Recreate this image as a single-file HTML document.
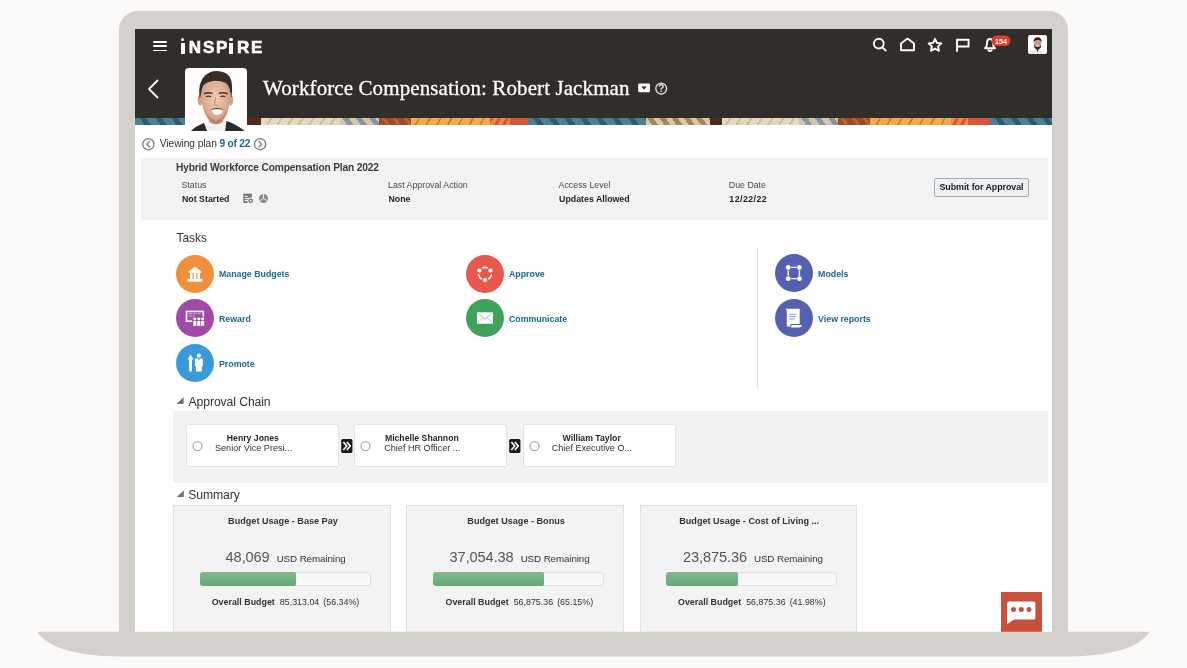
<!DOCTYPE html>
<html><head><meta charset="utf-8"><style>
html,body{margin:0;padding:0;}
body{width:1187px;height:668px;overflow:hidden;background:#fbfaf8;position:relative;font-family:'Liberation Sans', sans-serif;}
.b{position:absolute;}
.t{position:absolute;white-space:nowrap;line-height:1;font-family:'Liberation Sans', sans-serif;}
#root{position:absolute;left:0;top:0;width:1187px;height:668px;will-change:transform;}
</style></head><body><div id="root">
<div class="b" style="left:119px;top:11px;width:949px;height:629px;background:#d4d0cc;border-radius:19px 19px 0 0;"></div>
<div class="b" style="left:135px;top:29px;width:917px;height:603px;background:#fff;"></div>
<div class="b" style="left:135px;top:29px;width:917px;height:89px;background:#312d2a;"></div>
<div class="b" style="left:135px;top:118px;width:112px;height:7px;background:repeating-linear-gradient(55deg,#4a8294 0 8px,#2f5a6a 8px 13px);"></div>
<div class="b" style="left:247px;top:118px;width:14px;height:7px;background:#55291f;"></div>
<div class="b" style="left:261px;top:118px;width:79px;height:7px;background:repeating-linear-gradient(-58deg,#e4d8c0 0 7px,#cdbb9a 7px 9px);"></div>
<div class="b" style="left:340px;top:118px;width:39px;height:7px;background:repeating-linear-gradient(55deg,#d5c4a8 0 6px,#8896a4 6px 11px);"></div>
<div class="b" style="left:379px;top:118px;width:32px;height:7px;background:repeating-linear-gradient(55deg,#9c4b22 0 6px,#b8652f 6px 9px);"></div>
<div class="b" style="left:411px;top:118px;width:79px;height:7px;background:repeating-linear-gradient(-62deg,#eeab4a 0 8px,#c07a34 8px 9.5px);"></div>
<div class="b" style="left:490px;top:118px;width:20px;height:7px;background:repeating-linear-gradient(-62deg,#e98a3e 0 4px,#d6553a 4px 7px);"></div>
<div class="b" style="left:510px;top:118px;width:18px;height:7px;background:#d8553b;"></div>
<div class="b" style="left:528px;top:118px;width:118px;height:7px;background:repeating-linear-gradient(55deg,#4a8294 0 8px,#2f5a6a 8px 13px);"></div>
<div class="b" style="left:646px;top:118px;width:64px;height:7px;background:repeating-linear-gradient(55deg,#d9c7a6 0 5px,#a5845f 5px 10px);"></div>
<div class="b" style="left:710px;top:118px;width:12px;height:7px;background:#4f2a22;"></div>
<div class="b" style="left:722px;top:118px;width:77px;height:7px;background:repeating-linear-gradient(-58deg,#e4d8c0 0 7px,#cdbb9a 7px 9px);"></div>
<div class="b" style="left:799px;top:118px;width:39px;height:7px;background:repeating-linear-gradient(55deg,#d5c4a8 0 6px,#8896a4 6px 11px);"></div>
<div class="b" style="left:838px;top:118px;width:32px;height:7px;background:repeating-linear-gradient(55deg,#9c4b22 0 6px,#b8652f 6px 9px);"></div>
<div class="b" style="left:870px;top:118px;width:81px;height:7px;background:repeating-linear-gradient(-62deg,#eeab4a 0 8px,#c07a34 8px 9.5px);"></div>
<div class="b" style="left:951px;top:118px;width:17px;height:7px;background:repeating-linear-gradient(-62deg,#e98a3e 0 4px,#d6553a 4px 7px);"></div>
<div class="b" style="left:968px;top:118px;width:22px;height:7px;background:#d8553b;"></div>
<div class="b" style="left:990px;top:118px;width:62px;height:7px;background:repeating-linear-gradient(55deg,#4a8294 0 8px,#2f5a6a 8px 13px);"></div>
<div class="b" style="left:185px;top:67.6px;width:62px;height:63px;background:#fff;border-radius:4px;overflow:hidden">
<svg width="62" height="63" viewBox="0 0 62 63">
<defs>
<radialGradient id="sk" cx="0.5" cy="0.42" r="0.62"><stop offset="0" stop-color="#efcbb4"/><stop offset="0.65" stop-color="#dcac90"/><stop offset="1" stop-color="#c28b70"/></radialGradient>
</defs>
<path d="M17 64 L18.5 55.5 Q24 52.5 31 53.5 Q38 52.5 43 54.5 L42 64 Z" fill="#f2f2f0"/>
<path d="M5 64 Q10 58.5 19 55 L22.5 64 Z" fill="#2b2a2c"/>
<path d="M41.5 53 Q52 56.5 61 64 L40 64 Z" fill="#2b2a2c"/>
<path d="M23 45 L24 54 Q31 58.5 38 54 L39 45 Z" fill="#c99377"/>
<ellipse cx="15.2" cy="32" rx="2.6" ry="5.6" fill="#d49f82"/>
<ellipse cx="45.6" cy="32" rx="2.5" ry="5.6" fill="#d49f82"/>
<path d="M16 24 Q15.8 12 30.5 11.5 Q45.2 12 45 24 Q45 37 42 46 Q37.5 55.5 31 56.2 Q24.5 55.5 20 46 Q16.2 37 16 24 Z" fill="url(#sk)"/>
<path d="M14.6 31 Q12.6 14 20 7.5 Q25.6 3 31.6 3.1 Q40.6 3.2 44.8 9 Q48.4 15 46.4 30 L45 23.5 Q44.5 17 40 14.4 Q34 12.4 28 13 Q20.6 13.8 17.8 18.3 Q16.4 22 16.2 25.5 Z" fill="#3b2b24"/>
<path d="M19.5 25.6 Q23 24 26.8 25.2 M34.6 25.2 Q38.4 24 42 25.6" stroke="#4d3429" stroke-width="1.6" fill="none" stroke-linecap="round"/>
<path d="M21 28.8 Q23.6 27.6 26.2 28.8 M35.2 28.8 Q37.8 27.6 40.4 28.8" stroke="#4a3026" stroke-width="1.2" fill="none"/>
<path d="M30.6 29 L29.2 37 Q30.8 38.2 32.6 37" stroke="#b78166" stroke-width="0.9" fill="none"/>
<path d="M26.6 42.4 Q32 40.6 38 42.4 Q36.6 46.6 32.2 46.8 Q28 46.6 26.6 42.4 Z" fill="#fff"/>
<path d="M24.4 42 Q31.6 38 39.6 42 Q31.6 40 24.4 42Z" fill="#5b3b2e"/>
<path d="M20 41 Q22 52 31 56 Q40 52 42 41 Q40 49.5 31 52.8 Q22 49.5 20 41Z" fill="#8a6250" opacity="0.4"/>
</svg></div>
<div class="b" style="left:153px;top:41.2px;width:14px;height:1.7000000000000028px;background:#fff;border-radius:1px;"></div>
<div class="b" style="left:153px;top:45.4px;width:14px;height:1.7000000000000028px;background:#fff;border-radius:1px;"></div>
<div class="b" style="left:153px;top:49.6px;width:14px;height:1.7000000000000028px;background:#fff;border-radius:1px;"></div>
<div class="t" style="left:188.80px;top:39.21px;font-size:17px;font-weight:700;color:#fff;font-family:'Liberation Sans', sans-serif;-webkit-text-stroke:0.6px #fff;">N</div>
<div class="t" style="left:202.90px;top:39.21px;font-size:17px;font-weight:700;color:#fff;font-family:'Liberation Sans', sans-serif;-webkit-text-stroke:0.6px #fff;">S</div>
<div class="t" style="left:216.00px;top:39.21px;font-size:17px;font-weight:700;color:#fff;font-family:'Liberation Sans', sans-serif;-webkit-text-stroke:0.6px #fff;">P</div>
<div class="t" style="left:237.00px;top:39.21px;font-size:17px;font-weight:700;color:#fff;font-family:'Liberation Sans', sans-serif;-webkit-text-stroke:0.6px #fff;">R</div>
<div class="t" style="left:251.00px;top:39.21px;font-size:17px;font-weight:700;color:#fff;font-family:'Liberation Sans', sans-serif;-webkit-text-stroke:0.6px #fff;">E</div>
<div class="b" style="left:180.8px;top:43.2px;width:4.0px;height:10.399999999999999px;background:#fff;"></div>
<div class="b" style="left:181.20000000000002px;top:38.2px;width:3.1999999999999886px;height:3.1999999999999957px;background:#fff;border-radius:50%;"></div>
<div class="b" style="left:229.0px;top:43.2px;width:4.0px;height:10.399999999999999px;background:#fff;"></div>
<div class="b" style="left:229.4px;top:38.2px;width:3.1999999999999886px;height:3.1999999999999957px;background:#fff;border-radius:50%;"></div>
<svg class="b" style="left:145px;top:78px" width="16" height="22" viewBox="0 0 16 22"><path d="M12.5 2.5 L4 11 L12.5 19.5" fill="none" stroke="#fff" stroke-width="1.8" stroke-linecap="round" stroke-linejoin="round"/></svg>
<div class="t" style="left:263.00px;top:77.61px;font-size:21px;font-weight:400;color:#fff;font-family:'Liberation Serif', serif;letter-spacing:0.1px;-webkit-text-stroke:0.3px #fff;">Workforce Compensation: Robert Jackman</div>
<svg class="b" style="left:636px;top:80px" width="34" height="17" viewBox="0 0 34 17"><rect x="2.2" y="3.4" width="11.8" height="8.9" rx="1.3" fill="#fff"/><path d="M5.4 6.4 L10.8 6.4 L8.1 9.6 Z" fill="#222"/><circle cx="25.2" cy="8.6" r="5.4" fill="none" stroke="#dcdcdc" stroke-width="1.4"/><text x="25.3" y="12.2" font-size="10" font-family="Liberation Sans" font-weight="700" fill="#e0e0e0" text-anchor="middle">?</text></svg>
<svg class="b" style="left:868px;top:32px" width="185" height="26" viewBox="868 32 185 26">
<g fill="none" stroke="#fff" stroke-width="1.9" stroke-linecap="round" stroke-linejoin="round">
<circle cx="878.8" cy="43.6" r="4.9"/><path d="M882.4 47.4 L885.8 50.6"/>
<path d="M901 50.2 V43.5 L907.5 38.6 L914 43.5 V50.2 Z"/>
<path d="M935 38.8 L936.9 42.9 L941.4 43.4 L938.1 46.4 L939 50.8 L935 48.6 L931 50.8 L931.9 46.4 L928.6 43.4 L933.1 42.9 Z"/>
<path d="M957 51 V39.8 H968.6 V46.5 H957"/>
<path d="M985 48.2 H995 Q993 46.5 993 43.5 Q993 39 990 39 Q987 39 987 43.5 Q987 46.5 985 48.2 Z"/><path d="M988.3 50.3 Q990 51.8 991.7 50.3"/>
</g>
<rect x="991.5" y="35.5" width="19" height="10.5" rx="5.25" fill="#df3d2a"/>
<text x="1001" y="43.5" font-size="7.2" font-family="Liberation Sans" font-weight="700" fill="#fff" text-anchor="middle">154</text>
</svg>
<div class="b" style="left:1027.5px;top:35.2px;width:19px;height:19px;background:#fff;border-radius:2px;overflow:hidden">
<svg width="19" height="19" viewBox="0 0 19 19"><path d="M2.5 19 Q4 15 9.5 14.3 Q15 15 16.5 19Z" fill="#e4eaee"/><path d="M8.3 14.3 L9.5 17 L10.7 14.3Z" fill="#2a2a2a"/><ellipse cx="9.6" cy="8.8" rx="3.6" ry="5.3" fill="#d09b7d"/><path d="M5.6 7.8 Q5.3 2.3 9.6 2.2 Q13.9 2.3 13.6 7.8 Q12.6 4.8 9.6 4.8 Q6.6 4.8 5.6 7.8Z" fill="#2a1c16"/><path d="M5.8 9.6 Q6.2 14.4 9.6 14.6 Q13 14.4 13.4 9.6 Q12.4 12.2 9.6 12.3 Q6.8 12.2 5.8 9.6Z" fill="#2f1f18"/><rect x="8.2" y="10.6" width="2.8" height="0.9" fill="#f0e0d0"/></svg></div>
<svg class="b" style="left:140px;top:136px" width="130" height="16" viewBox="140 136 130 16">
<g fill="none" stroke="#7a7a7a" stroke-width="1.3" stroke-linecap="round" stroke-linejoin="round">
<circle cx="148.4" cy="144.2" r="5.6"/><path d="M149.6 141.4 L146.8 144.2 L149.6 147"/>
<circle cx="260.1" cy="144.2" r="5.6"/><path d="M258.9 141.4 L261.7 144.2 L258.9 147"/>
</g></svg>
<div class="t" style="left:159.80px;top:139.27px;font-size:10.2px;font-weight:400;color:#333;font-family:'Liberation Sans', sans-serif;letter-spacing:-0.05px;">Viewing plan <span style="color:#1b6a8f;font-weight:700;letter-spacing:-0.25px">9 of 22</span></div>
<div class="b" style="left:141px;top:157.5px;width:907px;height:62.19999999999999px;background:#f3f3f3;"></div>
<div class="t" style="left:176.00px;top:162.67px;font-size:10.2px;font-weight:700;color:#3a3a3a;font-family:'Liberation Sans', sans-serif;letter-spacing:-0.15px;">Hybrid Workforce Compensation Plan 2022</div>
<div class="t" style="left:181.50px;top:180.55px;font-size:8.8px;font-weight:400;color:#4a4a4a;font-family:'Liberation Sans', sans-serif;">Status</div>
<div class="t" style="left:182.00px;top:195.15px;font-size:8.8px;font-weight:700;color:#1f1f1f;font-family:'Liberation Sans', sans-serif;">Not Started</div>
<div class="t" style="left:388.00px;top:180.55px;font-size:8.8px;font-weight:400;color:#4a4a4a;font-family:'Liberation Sans', sans-serif;">Last Approval Action</div>
<div class="t" style="left:388.50px;top:195.15px;font-size:8.8px;font-weight:700;color:#1f1f1f;font-family:'Liberation Sans', sans-serif;">None</div>
<div class="t" style="left:558.60px;top:180.55px;font-size:8.8px;font-weight:400;color:#4a4a4a;font-family:'Liberation Sans', sans-serif;">Access Level</div>
<div class="t" style="left:559.10px;top:195.15px;font-size:8.8px;font-weight:700;color:#1f1f1f;font-family:'Liberation Sans', sans-serif;">Updates Allowed</div>
<div class="t" style="left:728.80px;top:180.55px;font-size:8.8px;font-weight:400;color:#4a4a4a;font-family:'Liberation Sans', sans-serif;">Due Date</div>
<div class="t" style="left:729.30px;top:195.15px;font-size:8.8px;font-weight:700;color:#1f1f1f;font-family:'Liberation Sans', sans-serif;letter-spacing:0.45px;">12/22/22</div>
<svg class="b" style="left:240px;top:190px" width="32" height="16" viewBox="240 190 32 16">
<rect x="243.3" y="193.6" width="8.6" height="9.4" fill="#7a7a7a"/>
<rect x="244.8" y="196" width="3" height="1" fill="#f3f3f3"/><rect x="244.8" y="198" width="3" height="1" fill="#f3f3f3"/><rect x="244.8" y="200" width="3" height="1" fill="#f3f3f3"/>
<circle cx="250.6" cy="200.8" r="3.2" fill="#f3f3f3"/><circle cx="250.6" cy="200.8" r="2.4" fill="#7a7a7a"/><circle cx="250.6" cy="200.8" r="1" fill="#f3f3f3"/>
<circle cx="263.5" cy="198.5" r="4.5" fill="#8a8a8a"/>
<path d="M263.5 198.5 L263.5 194 M263.5 198.5 L267.4 200.7 M263.5 198.5 L259.6 200.7" stroke="#f3f3f3" stroke-width="0.9"/>
</svg>
<div class="b" style="left:934.3px;top:178.4px;width:94.70000000000005px;height:18.19999999999999px;background:#eef1f4;border:1px solid #a3abb3;border-radius:2px;box-sizing:border-box;"></div>
<div class="t" style="left:939.50px;top:183.37px;font-size:8.9px;font-weight:700;color:#1a1a1a;font-family:'Liberation Sans', sans-serif;letter-spacing:-0.05px;">Submit for Approval</div>
<div class="t" style="left:176.50px;top:232.53px;font-size:11.9px;font-weight:400;color:#333;font-family:'Liberation Sans', sans-serif;">Tasks</div>
<svg class="b" style="left:176.2px;top:254.5px" width="38" height="38" viewBox="-19 -19 38 38"><circle r="19" fill="#f0903a"/><path d="M-6.6 -2.2 L0 -7.6 L6.6 -2.2 Z" fill="#fff"/><rect x="-6.2" y="-2.6" width="12.4" height="1.6" fill="#fff"/><rect x="-5" y="-1" width="2.6" height="6.2" fill="#fff"/><rect x="-1.3" y="-1" width="2.6" height="6.2" fill="#fff"/><rect x="2.4" y="-1" width="2.6" height="6.2" fill="#fff"/><rect x="-7.4" y="5" width="14.8" height="2.7" fill="#fff"/></svg>
<div class="t" style="left:219.00px;top:270.35px;font-size:8.8px;font-weight:700;color:#1b6790;font-family:'Liberation Sans', sans-serif;">Manage Budgets</div>
<svg class="b" style="left:176.2px;top:299.2px" width="38" height="38" viewBox="-19 -19 38 38"><circle r="19" fill="#a24aa8"/><rect x="-8.5" y="-6.6" width="16.8" height="9.8" fill="none" stroke="#fff" stroke-width="1.6"/><path d="M-6.3 -4.3 h4 M-1.2 -4.3 h2.6 M2.5 -4.3 h3 M-6.3 -2 h3 M-2.2 -2 h2" stroke="#e2b6e4" stroke-width="1"/><g transform="translate(-1.2,0)"><g stroke="#a24aa8" stroke-width="1.2"><circle cx="1" cy="0.8" r="1.9"/><circle cx="5" cy="0.8" r="1.9"/><circle cx="8.8" cy="0.8" r="1.9"/><rect x="-0.9" y="2.8" width="3.8" height="5"/><rect x="3.1" y="2.8" width="3.8" height="5"/><rect x="6.9" y="2.8" width="3.8" height="5"/></g><g fill="#fff"><circle cx="1" cy="0.8" r="1.6"/><circle cx="5" cy="0.8" r="1.6"/><circle cx="8.8" cy="0.8" r="1.6"/><rect x="-0.6" y="3.1" width="3.2" height="4.7"/><rect x="3.4" y="3.1" width="3.2" height="4.7"/><rect x="7.2" y="3.1" width="3.2" height="4.7"/></g></g></svg>
<div class="t" style="left:219.00px;top:315.05px;font-size:8.8px;font-weight:700;color:#1b6790;font-family:'Liberation Sans', sans-serif;">Reward</div>
<svg class="b" style="left:176.2px;top:344.2px" width="38" height="38" viewBox="-19 -19 38 38"><circle r="19" fill="#3a9ad9"/><path d="M-7.3 -3.6 L-4.4 -8.8 L-1.5 -3.6 Z" fill="#fff"/><rect x="-5.8" y="-4" width="2.8" height="12.4" fill="#fff"/><circle cx="3.8" cy="-7.3" r="2.1" fill="#fff"/><path d="M-0.1 -4.4 H7.8 V3.2 H6.8 V8.4 H0.9 V3.2 H-0.1 Z" fill="#fff"/><path d="M2.6 -4.4 L3.8 -2.2 L5 -4.4Z" fill="#3a9ad9"/></svg>
<div class="t" style="left:219.00px;top:360.05px;font-size:8.8px;font-weight:700;color:#1b6790;font-family:'Liberation Sans', sans-serif;">Promote</div>
<svg class="b" style="left:466.2px;top:254.5px" width="38" height="38" viewBox="-19 -19 38 38"><circle r="19" fill="#e8584c"/><circle cx="-5.54" cy="-3.50" r="2.1" fill="#fff"/><circle cx="5.54" cy="-3.50" r="2.1" fill="#fff"/><circle cx="0.00" cy="6.10" r="2.1" fill="#fff"/><path d="M-2.19 -6.31 A6.4 6.4 0 0 1 2.19 -6.31 M6.30 0.81 A6.4 6.4 0 0 1 3.94 4.74 M-3.94 4.74 A6.4 6.4 0 0 1 -6.30 0.81" stroke="#fff" stroke-width="1.7" fill="none" stroke-linecap="round"/></svg>
<div class="t" style="left:509.00px;top:270.35px;font-size:8.8px;font-weight:700;color:#1b6790;font-family:'Liberation Sans', sans-serif;">Approve</div>
<svg class="b" style="left:466.2px;top:299.2px" width="38" height="38" viewBox="-19 -19 38 38"><circle r="19" fill="#3fa35c"/><rect x="-8" y="-5.7" width="16" height="11.4" fill="#fff"/><path d="M-7.5 -5 L0 1.2 L7.5 -5 M-7.5 5 L-2.5 0 M7.5 5 L2.5 0" stroke="#9dbfa8" stroke-width="0.9" fill="none"/></svg>
<div class="t" style="left:509.00px;top:315.05px;font-size:8.8px;font-weight:700;color:#1b6790;font-family:'Liberation Sans', sans-serif;">Communicate</div>
<svg class="b" style="left:775.3px;top:254.3px" width="38" height="38" viewBox="-19 -19 38 38"><circle r="19" fill="#5660b2"/><g stroke="#fff" stroke-width="1.4"><path d="M-2.8 -5.6 H2.6 M-2.8 5.6 H2.6 M-5.8 -2.6 V2.8 M5.4 -2.6 V2.8"/></g><circle cx="-5.8" cy="-5.5" r="2.4" fill="#fff"/><circle cx="5.4" cy="-5.5" r="2.4" fill="#fff"/><circle cx="-5.8" cy="5.7" r="2.4" fill="#fff"/><circle cx="5.4" cy="5.7" r="2.4" fill="#fff"/></svg>
<div class="t" style="left:818.10px;top:270.15px;font-size:8.8px;font-weight:700;color:#1b6790;font-family:'Liberation Sans', sans-serif;">Models</div>
<svg class="b" style="left:775.3px;top:299.2px" width="38" height="38" viewBox="-19 -19 38 38"><circle r="19" fill="#5660b2"/><path d="M-8.4 -9.3 H5.7 V6.0 H-2.4 Q-3.6 6.0 -3.6 7.2 V8.6 H-7.2 V-6.8 Q-7.4 -8.6 -8.4 -9.3 Z" fill="#fff"/><path d="M-2.2 7.1 H7.8 Q7.6 9.4 5.8 9.4 H-3.4 Q-2.6 8.6 -2.2 7.1 Z" fill="#fff"/><path d="M-4.8 -3.7 H2.1 M-4.8 -1.4 H2.1 M-4.8 1.0 H0.8" stroke="#8d94cc" stroke-width="1"/></svg>
<div class="t" style="left:818.10px;top:315.05px;font-size:8.8px;font-weight:700;color:#1b6790;font-family:'Liberation Sans', sans-serif;">View reports</div>
<div class="b" style="left:756.5px;top:248px;width:1.0px;height:140.5px;background:#e2e2e2;"></div>
<svg class="b" style="left:175px;top:397px" width="10" height="9" viewBox="175 397 10 9"><path d="M183.6 397.2 V404 H176.4 Z" fill="#707070"/></svg>
<div class="t" style="left:188.60px;top:395.67px;font-size:12.2px;font-weight:400;color:#333;font-family:'Liberation Sans', sans-serif;letter-spacing:-0.1px;">Approval Chain</div>
<div class="b" style="left:172.6px;top:411px;width:875.9px;height:72px;background:#f2f2f2;"></div>
<div class="b" style="left:186.3px;top:424.3px;width:152.5px;height:42.39999999999998px;background:#fff;border:1px solid #e1e4e6;border-radius:2px;box-sizing:border-box;"></div>
<svg class="b" style="left:191.3px;top:440px" width="12" height="12" viewBox="0 0 12 12"><circle cx="6.5" cy="6.1" r="4.5" fill="none" stroke="#aaaaaa" stroke-width="1.25"/></svg>
<div class="t" style="left:226.80px;top:433.64px;font-size:8.7px;font-weight:700;color:#1f1f1f;font-family:'Liberation Sans', sans-serif;">Henry Jones</div>
<div class="t" style="left:215.00px;top:443.60px;font-size:9.1px;font-weight:400;color:#333;font-family:'Liberation Sans', sans-serif;">Senior Vice Presi...</div>
<div class="b" style="left:354.2px;top:424.3px;width:152.8px;height:42.39999999999998px;background:#fff;border:1px solid #e1e4e6;border-radius:2px;box-sizing:border-box;"></div>
<svg class="b" style="left:359.2px;top:440px" width="12" height="12" viewBox="0 0 12 12"><circle cx="6.5" cy="6.1" r="4.5" fill="none" stroke="#aaaaaa" stroke-width="1.25"/></svg>
<div class="t" style="left:384.90px;top:433.64px;font-size:8.7px;font-weight:700;color:#1f1f1f;font-family:'Liberation Sans', sans-serif;">Michelle Shannon</div>
<div class="t" style="left:384.20px;top:443.60px;font-size:9.1px;font-weight:400;color:#333;font-family:'Liberation Sans', sans-serif;">Chief HR Officer ...</div>
<div class="b" style="left:523.2px;top:424.3px;width:152.79999999999995px;height:42.39999999999998px;background:#fff;border:1px solid #e1e4e6;border-radius:2px;box-sizing:border-box;"></div>
<svg class="b" style="left:528.2px;top:440px" width="12" height="12" viewBox="0 0 12 12"><circle cx="6.5" cy="6.1" r="4.5" fill="none" stroke="#aaaaaa" stroke-width="1.25"/></svg>
<div class="t" style="left:562.60px;top:433.64px;font-size:8.7px;font-weight:700;color:#1f1f1f;font-family:'Liberation Sans', sans-serif;">William Taylor</div>
<div class="t" style="left:551.70px;top:443.60px;font-size:9.1px;font-weight:400;color:#333;font-family:'Liberation Sans', sans-serif;">Chief Executive O...</div>
<svg class="b" style="left:340.8px;top:439.3px" width="12" height="14" viewBox="0 0 12 14"><rect x="0.2" y="0" width="11.2" height="14" rx="1.6" fill="#1a1a1a"/><path d="M2.4 2.9 L5.7 7 L2.4 11.1 M5.9 2.9 L9.2 7 L5.9 11.1" stroke="#fff" stroke-width="1.6" fill="none"/></svg>
<svg class="b" style="left:509px;top:439.3px" width="12" height="14" viewBox="0 0 12 14"><rect x="0.2" y="0" width="11.2" height="14" rx="1.6" fill="#1a1a1a"/><path d="M2.4 2.9 L5.7 7 L2.4 11.1 M5.9 2.9 L9.2 7 L5.9 11.1" stroke="#fff" stroke-width="1.6" fill="none"/></svg>
<svg class="b" style="left:175px;top:489px" width="10" height="9" viewBox="175 489 10 9"><path d="M183.8 490.4 V497 H176.8 Z" fill="#707070"/></svg>
<div class="t" style="left:188.20px;top:488.57px;font-size:12.2px;font-weight:400;color:#333;font-family:'Liberation Sans', sans-serif;letter-spacing:-0.1px;">Summary</div>
<div class="b" style="left:173px;top:504.7px;width:218.3px;height:135.3px;background:#f3f3f3;border:1px solid #dde2e6;box-sizing:border-box;"></div>
<div class="t" style="left:82.95px;width:400px;text-align:center;top:516.60px;font-size:9.1px;font-weight:700;color:#333;">Budget Usage - Base Pay</div>
<div class="t" style="left:225.60px;top:549.64px;font-size:14.6px;font-weight:400;color:#555;font-family:'Liberation Sans', sans-serif;letter-spacing:-0.1px;">48,069<span style="font-size:9.8px;color:#333;margin-left:7px;letter-spacing:-0.1px">USD Remaining</span></div>
<div class="b" style="left:199.7px;top:571.7px;width:171.3px;height:14.299999999999955px;background:linear-gradient(#f4f4f4,#fbfbfb);border:1px solid #e0e0e0;border-radius:3px;box-sizing:border-box;"></div>
<div class="b" style="left:199.7px;top:571.7px;width:96.30000000000001px;height:14.299999999999955px;background:linear-gradient(#7db98d,#67aa79);border-radius:3px 2px 2px 3px;"></div>
<div class="t" style="left:211.70px;top:598.17px;font-size:8.9px;font-weight:700;color:#333;font-family:'Liberation Sans', sans-serif;">Overall Budget<span style="font-weight:400;margin-left:5px">85,313.04</span><span style="font-weight:400;margin-left:4px">(56.34%)</span></div>
<div class="b" style="left:406.3px;top:504.7px;width:217.99999999999994px;height:135.3px;background:#f3f3f3;border:1px solid #dde2e6;box-sizing:border-box;"></div>
<div class="t" style="left:316.10px;width:400px;text-align:center;top:516.60px;font-size:9.1px;font-weight:700;color:#333;">Budget Usage - Bonus</div>
<div class="t" style="left:449.60px;top:549.64px;font-size:14.6px;font-weight:400;color:#555;font-family:'Liberation Sans', sans-serif;letter-spacing:-0.1px;">37,054.38<span style="font-size:9.8px;color:#333;margin-left:7px;letter-spacing:-0.1px">USD Remaining</span></div>
<div class="b" style="left:433.4px;top:571.7px;width:170.60000000000002px;height:14.299999999999955px;background:linear-gradient(#f4f4f4,#fbfbfb);border:1px solid #e0e0e0;border-radius:3px;box-sizing:border-box;"></div>
<div class="b" style="left:433.4px;top:571.7px;width:110.39999999999998px;height:14.299999999999955px;background:linear-gradient(#7db98d,#67aa79);border-radius:3px 2px 2px 3px;"></div>
<div class="t" style="left:445.50px;top:598.17px;font-size:8.9px;font-weight:700;color:#333;font-family:'Liberation Sans', sans-serif;">Overall Budget<span style="font-weight:400;margin-left:5px">56,875.36</span><span style="font-weight:400;margin-left:4px">(65.15%)</span></div>
<div class="b" style="left:639.6px;top:504.7px;width:217.60000000000002px;height:135.3px;background:#f3f3f3;border:1px solid #dde2e6;box-sizing:border-box;"></div>
<div class="t" style="left:549.20px;width:400px;text-align:center;top:516.60px;font-size:9.1px;font-weight:700;color:#333;">Budget Usage - Cost of Living ...</div>
<div class="t" style="left:682.90px;top:549.64px;font-size:14.6px;font-weight:400;color:#555;font-family:'Liberation Sans', sans-serif;letter-spacing:-0.1px;">23,875.36<span style="font-size:9.8px;color:#333;margin-left:7px;letter-spacing:-0.1px">USD Remaining</span></div>
<div class="b" style="left:666px;top:571.7px;width:171px;height:14.299999999999955px;background:linear-gradient(#f4f4f4,#fbfbfb);border:1px solid #e0e0e0;border-radius:3px;box-sizing:border-box;"></div>
<div class="b" style="left:666px;top:571.7px;width:71.5px;height:14.299999999999955px;background:linear-gradient(#7db98d,#67aa79);border-radius:3px 2px 2px 3px;"></div>
<div class="t" style="left:678.00px;top:598.17px;font-size:8.9px;font-weight:700;color:#333;font-family:'Liberation Sans', sans-serif;">Overall Budget<span style="font-weight:400;margin-left:5px">56,875.36</span><span style="font-weight:400;margin-left:4px">(41.98%)</span></div>
<svg class="b" style="left:1001px;top:592px" width="41" height="40" viewBox="0 0 41 40"><rect width="41" height="40" fill="#c9503c"/>
<path d="M6.1 11.6 Q6.1 9.6 8.1 9.6 H32.4 Q34.4 9.6 34.4 11.6 V25.6 Q34.4 27.6 32.4 27.6 H13 L6.1 32.2 Z" fill="#fff"/>
<circle cx="12.5" cy="17.55" r="2.5" fill="#c9503c"/><circle cx="20.3" cy="17.55" r="2.5" fill="#c9503c"/><circle cx="27.9" cy="17.55" r="2.5" fill="#c9503c"/></svg>
<svg class="b" style="left:0;top:620px" width="1187" height="48" viewBox="0 620 1187 48"><path d="M37.2 631.8 H1149.6 C1139 648 1110 656.4 1067 656.4 H120 C77 656.4 48 648 37.2 631.8 Z" fill="#d4d0cc"/></svg>
</div></body></html>
